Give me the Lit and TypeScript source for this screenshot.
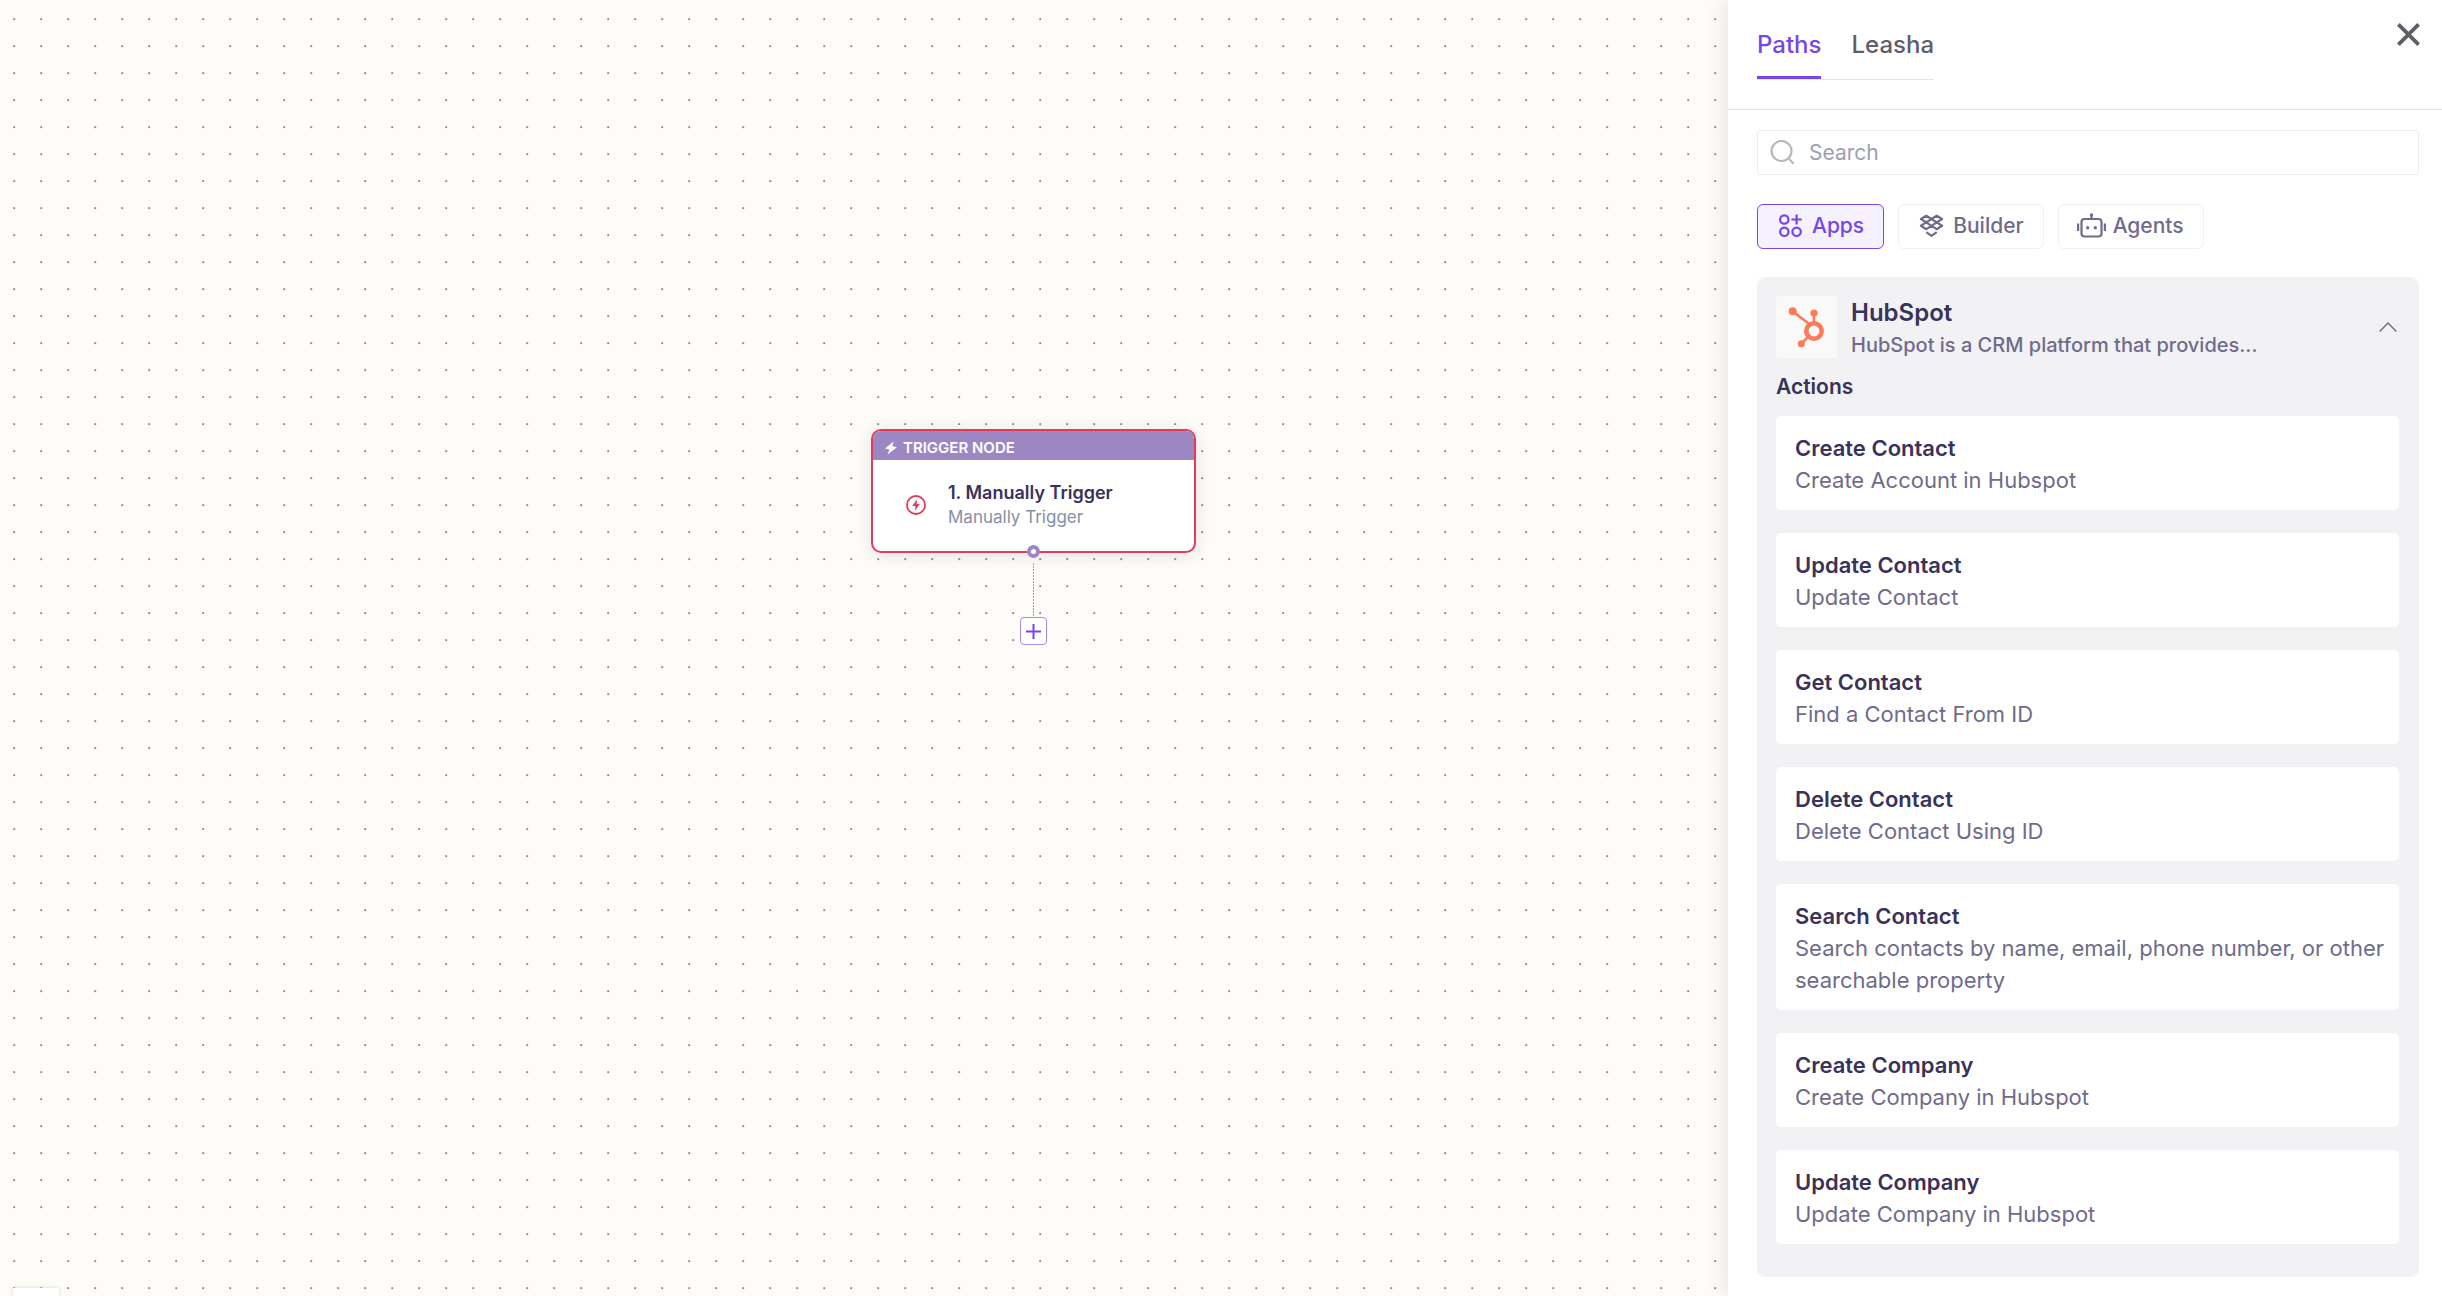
import { LitElement, html, css } from "lit";
import { customElement, state } from "lit/decorators.js";
import { classMap } from "lit/directives/class-map.js";

interface Action {
  title: string;
  detail: string;
}

const ACTIONS: Action[] = [
  { title: "Create Contact", detail: "Create Account in Hubspot" },
  { title: "Update Contact", detail: "Update Contact" },
  { title: "Get Contact", detail: "Find a Contact From ID" },
  { title: "Delete Contact", detail: "Delete Contact Using ID" },
  {
    title: "Search Contact",
    detail: "Search contacts by name, email, phone number, or other searchable property",
  },
  { title: "Create Company", detail: "Create Company in Hubspot" },
  { title: "Update Company", detail: "Update Company in Hubspot" },
];

const appsIcon = html`<svg width="29" height="24" viewBox="-3 0 29 24" fill="none" stroke="currentColor" stroke-width="2.2" aria-hidden="true">
  <circle cx="5.3" cy="5.5" r="4.2" /><circle cx="5.3" cy="17.8" r="4.2" /><circle cx="17.6" cy="17.8" r="4.2" />
  <path d="M17.6 .5v10M12.4 5.5h10.4" />
</svg>`;

const builderIcon = html`<svg width="29" height="24" viewBox="-2.5 0 29 24" fill="none" stroke="currentColor" stroke-width="2.2" stroke-linejoin="round" aria-hidden="true">
  <path d="M6.8 1.8 12 5 6.8 8.4 1.4 5zM17.2 1.8 22.6 5l-5.4 3.4L12 5zM6.8 8.4 12 11.8l-5.2 3.4-5.4-3.4zM17.2 8.4l5.4 3.4-5.4 3.4-5.2-3.4zM6.8 8.4 12 5l5.2 3.4L12 11.8z" />
  <path d="M6.8 18.2 12 21.8l5.2-3.6" />
</svg>`;

const agentsIcon = html`<svg width="29" height="26" viewBox="0.5 0 29 26" fill="none" stroke="currentColor" stroke-width="2.2" aria-hidden="true">
  <rect x="5" y="6" width="20" height="17.5" rx="3" />
  <path d="M15 2v4M1.6 10.5V18M28.4 10.5V18" />
  <g fill="currentColor" stroke="none">
    <circle cx="15" cy="2" r="1.7" /><circle cx="11.2" cy="14.8" r="1.7" /><circle cx="18.8" cy="14.8" r="1.7" />
  </g>
</svg>`;

const FILTERS = [
  { name: "Apps", icon: appsIcon },
  { name: "Builder", icon: builderIcon },
  { name: "Agents", icon: agentsIcon },
];

const base = css`
  * {
    box-sizing: border-box;
  }
  button {
    font: inherit;
    color: inherit;
    background: none;
    border: 0;
    margin: 0;
    padding: 0;
    text-align: left;
    cursor: pointer;
  }
  svg {
    display: block;
    flex: none;
  }
`;

@customElement("flow-canvas")
export class FlowCanvas extends LitElement {
  static styles = [
    base,
    css`
      :host {
        display: block;
        position: relative;
        overflow: hidden;
        background: #fdfcf9;
      }
      .grid {
        position: absolute;
        inset: 0;
        width: 100%;
        height: 100%;
      }
      .flow {
        position: absolute;
        left: 871px;
        top: 429px;
        width: 325px;
        display: flex;
        flex-direction: column;
        align-items: center;
      }
      .node {
        width: 100%;
        border: 2px solid #e03c5c;
        border-radius: 10px;
        background: #fff;
        box-shadow: 0 2px 16px rgba(40, 30, 60, 0.12);
        overflow: hidden;
      }
      .kind {
        display: flex;
        align-items: center;
        gap: 6px;
        height: 29px;
        padding: 4px 12px 0;
        background: #9d87c3;
        color: #fff;
        font-size: 15px;
        font-weight: 600;
      }
      .body {
        display: flex;
        align-items: center;
        gap: 22px;
        height: 91px;
        padding: 0 33px 1px;
      }
      .name {
        font-size: 18px;
        line-height: 25px;
        font-weight: 600;
        color: #39325a;
      }
      .sub {
        font-size: 17px;
        line-height: 25px;
        color: #8590a5;
      }
      .handle {
        width: 13px;
        height: 13px;
        margin-top: -8px;
        border: 4px solid #9d87c3;
        border-radius: 50%;
        background: #fff;
        z-index: 1;
      }
      .wire {
        width: 1px;
        height: 54px;
        margin-top: 5px;
        background: repeating-linear-gradient(#a79cc4 0 2px, transparent 2px 3px);
      }
      .add {
        width: 27px;
        height: 28px;
        display: grid;
        place-items: center;
        border: 1px solid #a98be8;
        border-radius: 4px;
        background: #fff;
        color: #7747e6;
      }
      .controls {
        position: absolute;
        left: 13px;
        bottom: 0;
        width: 46px;
        height: 8px;
        background: #fff;
        box-shadow: 0 0 5px rgba(0, 0, 0, 0.14);
      }
    `,
  ];

  render() {
    return html`
      <svg class="grid" aria-hidden="true">
        <defs>
          <pattern id="dots" width="27" height="27" patternUnits="userSpaceOnUse">
            <circle cx="14.2" cy="19.2" r="1.1" fill="#8f8f8f" />
          </pattern>
        </defs>
        <rect width="100%" height="100%" fill="url(#dots)" />
      </svg>
      <div class="flow">
        <article class="node">
          <div class="kind">
            <svg width="12" height="14" viewBox="0 0 12 14" fill="currentColor" aria-hidden="true">
              <path d="M8.6.5 0 7.6l4.4 1L2.6 13.6 12 6.2l-4.6-1z" />
            </svg>
            TRIGGER NODE
          </div>
          <div class="body">
            <svg width="20" height="20" viewBox="0 0 20 20" aria-hidden="true">
              <circle cx="10" cy="10" r="9" fill="none" stroke="#e03c5c" stroke-width="1.8" />
              <path d="M11 4.2 6.2 11h3.2L9 15.8l4.8-6.8h-3.2z" fill="#e03c5c" />
            </svg>
            <div>
              <div class="name">1. Manually Trigger</div>
              <div class="sub">Manually Trigger</div>
            </div>
          </div>
        </article>
        <span class="handle"></span>
        <span class="wire"></span>
        <button class="add" aria-label="Add step">
          <svg width="15" height="15" viewBox="0 0 15 15" stroke="currentColor" stroke-width="2" aria-hidden="true">
            <path d="M7.5 0v15M0 7.5h15" />
          </svg>
        </button>
      </div>
      <div class="controls"></div>
    `;
  }
}

@customElement("paths-panel")
export class PathsPanel extends LitElement {
  @state() private tab = "Paths";
  @state() private filter = "Apps";
  @state() private open = true;

  static styles = [
    base,
    css`
      :host {
        display: block;
        position: relative;
        background: #fff;
        box-shadow: 0 0 22px rgba(60, 50, 30, 0.14);
        font-size: 21px;
        line-height: 32px;
        color: #706b8c;
      }
      .top {
        display: flex;
        justify-content: space-between;
        align-items: flex-start;
        padding: 23px 22px 29px 29px;
        border-bottom: 1px solid #e4e4e7;
      }
      .tabs {
        display: flex;
        gap: 30px;
        margin-top: 6px;
        border-bottom: 1px solid #e4e4e7;
      }
      .tab {
        padding-bottom: 15px;
        border-bottom: 3px solid transparent;
        font-size: 24px;
        font-weight: 500;
        color: #5f5e68;
      }
      .tab.on {
        color: #7747e6;
        border-color: #7747e6;
      }
      .close {
        color: #5f5e68;
      }
      .content {
        display: flex;
        flex-direction: column;
        padding: 20px 23px 18px 29px;
      }
      .search {
        display: flex;
        align-items: center;
        gap: 14px;
        height: 45px;
        padding: 0 12px;
        border: 1px solid #eeeef0;
        border-radius: 4px;
        color: #b9b8c1;
      }
      .search input {
        flex: 1;
        min-width: 0;
        border: 0;
        outline: 0;
        padding: 0;
        background: none;
        font: inherit;
        color: #39325a;
      }
      .search input::placeholder {
        color: #9ca0b0;
        opacity: 1;
      }
      .filters {
        display: flex;
        gap: 14px;
        margin: 29px 0 28px;
      }
      .filter {
        display: flex;
        align-items: center;
        gap: 7px;
        height: 45px;
        padding: 0 19px 1px 18px;
        border: 1px solid #f1f1f3;
        border-radius: 6px;
        font-weight: 500;
      }
      .filter.on {
        color: #7747e6;
        background: #f5f1ff;
        border-color: #7747e6;
      }
      .app {
        display: flex;
        flex-direction: column;
        padding: 19px 20px 33px 19px;
        border-radius: 8px;
        background: #f2f2f4;
      }
      .head {
        display: flex;
        align-items: flex-start;
        gap: 14px;
      }
      .logo {
        border-radius: 3px;
        background: #f9f9f9;
      }
      .about {
        flex: 1;
        min-width: 0;
        padding-top: 1px;
      }
      .title {
        display: block;
        font-size: 24px;
        font-weight: 600;
        color: #39325a;
      }
      .summary {
        display: block;
        font-size: 20px;
        font-weight: 500;
      }
      .chevron {
        margin: 26px 2px 0 0;
      }
      .label {
        margin: 10px 0 13px;
        font-weight: 600;
        color: #39325a;
      }
      .list {
        display: flex;
        flex-direction: column;
        gap: 23px;
        margin: 0;
        padding: 0;
        list-style: none;
      }
      .card {
        display: block;
        width: 100%;
        padding: 16px 12px 14px 19px;
        border-radius: 5px;
        background: #fff;
        font-size: 22px;
      }
      .card strong,
      .card span {
        display: block;
      }
      .card strong {
        font-weight: 600;
        color: #39325a;
      }
    `,
  ];

  render() {
    return html`
      <header class="top">
        <div class="tabs" role="tablist">
          ${["Paths", "Leasha"].map(
            (name) => html`<button
              role="tab"
              aria-selected=${this.tab === name}
              class=${classMap({ tab: true, on: this.tab === name })}
              @click=${() => (this.tab = name)}
            >${name}</button>`,
          )}
        </div>
        <button class="close" aria-label="Close">
          <svg width="23" height="23" viewBox="0 0 23 23" stroke="currentColor" stroke-width="3.8" aria-hidden="true">
            <path d="m1.4 1.4 20.2 20.2M21.6 1.4 1.4 21.6" />
          </svg>
        </button>
      </header>
      <div class="content">
        <label class="search">
          <svg width="25" height="25" viewBox="0 0 25 25" fill="none" stroke="currentColor" stroke-width="2.2" aria-hidden="true">
            <circle cx="11.5" cy="11" r="10" /><path d="m18.5 18.5 5.3 5.3" />
          </svg>
          <input type="search" placeholder="Search" aria-label="Search" />
        </label>
        <div class="filters">
          ${FILTERS.map(
            ({ name, icon }) => html`<button
              class=${classMap({ filter: true, on: this.filter === name })}
              aria-pressed=${this.filter === name}
              @click=${() => (this.filter = name)}
            >${icon}${name}</button>`,
          )}
        </div>
        <section class="app">
          <button class="head" aria-expanded=${this.open} @click=${() => (this.open = !this.open)}>
            <svg class="logo" width="61" height="62" viewBox="0 0 61 62" aria-hidden="true">
              <g fill="#ff7a59">
                <circle cx="16.7" cy="15.3" r="4" /><circle cx="38" cy="17" r="3.6" /><circle cx="25.3" cy="47.7" r="3.5" />
              </g>
              <g fill="none" stroke="#ff7a59">
                <circle cx="38" cy="35" r="7.7" stroke-width="4.6" />
                <path d="M38 18v9M17 15.5l15.5 12M25.5 47.5l6.5-6.5" stroke-width="2.6" />
              </g>
            </svg>
            <span class="about">
              <span class="title">HubSpot</span>
              <span class="summary">HubSpot is a CRM platform that provides...</span>
            </span>
            <svg class="chevron" width="18" height="10" viewBox="0 0 18 10" fill="none" stroke="#706b7c" stroke-width="1.4" aria-hidden="true">
              <path d=${this.open ? "M.6 9.4 9 1l8.4 8.4" : "M.6.6 9 9 17.4.6"} />
            </svg>
          </button>
          ${this.open
            ? html`<div class="label">Actions</div>
                <ul class="list">
                  ${ACTIONS.map(
                    (a) => html`<li><button class="card"><strong>${a.title}</strong><span>${a.detail}</span></button></li>`,
                  )}
                </ul>`
            : null}
        </section>
      </div>
    `;
  }
}

@customElement("app-root")
export class AppRoot extends LitElement {
  static styles = css`
    :host {
      display: grid;
      grid-template-columns: minmax(0, 1fr) minmax(420px, 714px);
      min-height: 100vh;
      font-family: Inter, "Noto Sans", sans-serif;
    }
  `;

  render() {
    return html`<flow-canvas></flow-canvas><paths-panel></paths-panel>`;
  }
}
